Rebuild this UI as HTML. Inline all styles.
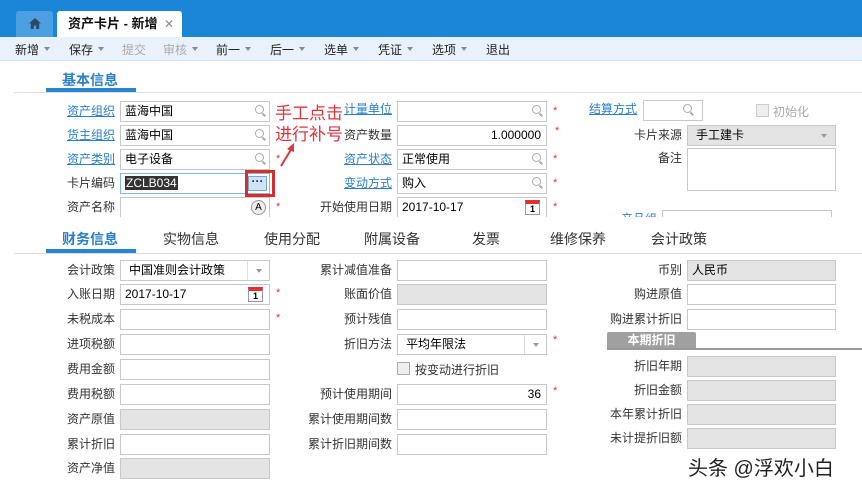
<!DOCTYPE html>
<html><head><meta charset="utf-8"><style>
*{margin:0;padding:0;box-sizing:border-box}
body{width:862px;height:491px;overflow:hidden;background:#fff;font-family:"Liberation Sans","Noto Sans CJK SC",sans-serif;font-size:12px;color:#333;position:relative}
.a{position:absolute}
.lb{position:absolute;text-align:right;font-size:12px;color:#333;line-height:20px}
.lk{color:#2a7fc9;text-decoration:underline}
.in{position:absolute;height:21px;border:1px solid #c8c8c8;background:#fff;font-size:12px;line-height:19px;padding-left:4px;color:#000}
.g{background:#e4e4e4}
.st{position:absolute;color:#d33;font-size:11px}
.mg{position:absolute;right:5px;top:3px;width:9px;height:9px;border:1.5px solid #aaa;border-radius:50%}
.mg:after{content:"";position:absolute;width:4px;height:1.5px;background:#aaa;transform:rotate(45deg);left:6px;top:8px}
.dd{position:absolute;right:0;top:0;width:22px;height:19px;border-left:1px solid #ddd}
.dd:after{content:"";position:absolute;left:8px;top:8px;border:3px solid transparent;border-top:4px solid #999}
.cal{position:absolute;right:6px;top:2px;width:15px;height:15px;border:1px solid #999;border-top:4px solid #e03030;font-size:9px;font-weight:bold;text-align:center;line-height:10px;color:#000}
.tb{position:absolute;top:41px;font-size:12px;color:#222}
.ar{display:inline-block;margin-left:5px;border:3px solid transparent;border-top:4px solid #888;vertical-align:middle}
.tab{position:absolute;top:229px;font-size:14px;color:#333}
</style></head><body>
<div class="a" style="left:0;top:0;width:862px;height:37px;background:#1b86d6"></div>
<div class="a" style="left:16px;top:11px;width:37px;height:26px;background:#4c9fe0;border-radius:3px 3px 0 0"></div>
<svg class="a" style="left:29px;top:18px" width="12" height="11" viewBox="0 0 12 11"><path d="M6 0L0 5.5h1.8V11h3V7.5h2.4V11h3V5.5H12z" fill="#2a4a6a"/></svg>
<div class="a" style="left:57px;top:11px;width:125px;height:26px;background:#fff;border-radius:3px 3px 0 0;font-weight:bold;font-size:13px;line-height:26px;padding-left:11px;color:#111">资产卡片 - 新增</div>
<div class="a" style="left:164px;top:17px;color:#888;font-size:12px">✕</div>
<div class="a" style="left:0;top:37px;width:862px;height:24px;background:#e9f2fb;border-bottom:1px solid #d5e3f0"></div>
<div class="tb" style="left:15px">新增<span class="ar"></span></div>
<div class="tb" style="left:69px">保存<span class="ar"></span></div>
<div class="tb" style="left:122px;color:#aaa">提交</div>
<div class="tb" style="left:163px;color:#aaa">审核<span class="ar"></span></div>
<div class="tb" style="left:216px">前一<span class="ar"></span></div>
<div class="tb" style="left:270px">后一<span class="ar"></span></div>
<div class="tb" style="left:324px">选单<span class="ar"></span></div>
<div class="tb" style="left:378px">凭证<span class="ar"></span></div>
<div class="tb" style="left:432px">选项<span class="ar"></span></div>
<div class="tb" style="left:486px">退出</div>

<div class="a" style="left:62px;top:70px;font-size:14px;font-weight:bold;color:#2a7fc9">基本信息</div>
<div class="a" style="left:14px;top:92px;width:848px;height:1px;background:#ddd"></div>
<div class="a" style="left:46px;top:88px;width:90px;height:4px;background:#2a85d0"></div>

<div class="lb lk" style="left:50px;top:101px;width:65px">资产组织</div>
<div class="in" style="left:120px;top:101px;width:150px">蓝海中国<span class="mg"></span></div>
<div class="lb lk" style="left:50px;top:125px;width:65px">货主组织</div>
<div class="in" style="left:120px;top:125px;width:150px">蓝海中国<span class="mg"></span></div>
<div class="lb lk" style="left:50px;top:149px;width:65px">资产类别</div>
<div class="in" style="left:120px;top:149px;width:150px">电子设备<span class="mg"></span></div>
<div class="st" style="left:276px;top:153px">*</div>
<div class="lb" style="left:50px;top:173px;width:65px">卡片编码</div>
<div class="in" style="left:120px;top:173px;width:150px;border-color:#8ab6de"><span style="background:#333;color:#fff;padding:0 1px">ZCLB034</span>
<span class="a" style="right:2px;top:2px;width:19px;height:15px;background:#cfe3f5;border:1px solid #7aa7d0;font-weight:bold;line-height:8px;text-align:center;color:#234">···</span></div>
<div class="a" style="left:245px;top:170px;width:30px;height:27px;border:3px solid #d32f2f"></div>
<div class="lb" style="left:50px;top:197px;width:65px">资产名称</div>
<div class="in" style="left:120px;top:197px;width:150px"><span class="a" style="right:3px;top:2px;width:15px;height:15px;border:1px solid #999;border-radius:50%;background:#eee;font-size:10px;line-height:13px;text-align:center">A</span></div>
<div class="st" style="left:276px;top:201px">*</div>

<div class="a" style="left:275px;top:103px;font-size:17px;line-height:21px;color:#e0343c">手工点击<br>进行补号</div>
<svg class="a" style="left:276px;top:140px" width="24" height="30"><path d="M5 26L16 8" stroke="#e0343c" stroke-width="2"/><path d="M18 3L11 9L18 12z" fill="#e0343c"/></svg>

<div class="lb lk" style="left:330px;top:99px;width:62px">计量单位</div>
<div class="in" style="left:397px;top:101px;width:150px"><span class="mg"></span></div>
<div class="st" style="left:553px;top:105px">*</div>
<div class="lb" style="left:330px;top:125px;width:62px">资产数量</div>
<div class="in" style="left:397px;top:125px;width:150px;text-align:right;padding-right:5px">1.000000</div>
<div class="st" style="left:555px;top:125px">*</div>
<div class="lb lk" style="left:330px;top:149px;width:62px">资产状态</div>
<div class="in" style="left:397px;top:149px;width:150px">正常使用<span class="mg"></span></div>
<div class="st" style="left:553px;top:153px">*</div>
<div class="lb lk" style="left:330px;top:173px;width:62px">变动方式</div>
<div class="in" style="left:397px;top:173px;width:150px">购入<span class="mg"></span></div>
<div class="st" style="left:553px;top:177px">*</div>
<div class="lb" style="left:300px;top:197px;width:92px">开始使用日期</div>
<div class="in" style="left:397px;top:197px;width:150px">2017-10-17<span class="cal">1</span></div>
<div class="st" style="left:553px;top:201px">*</div>

<div class="lb lk" style="left:580px;top:99px;width:57px">结算方式</div>
<div class="in" style="left:643px;top:100px;width:60px"><span class="mg" style="right:10px"></span></div>
<div class="a" style="left:756px;top:104px;width:13px;height:13px;border:1px solid #ccc;background:#eee"></div>
<div class="a" style="left:773px;top:103px;color:#aaa;font-size:12px">初始化</div>
<div class="lb" style="left:600px;top:125px;width:82px">卡片来源</div>
<div class="in g" style="left:687px;top:125px;width:149px;padding-left:8px">手工建卡<span class="dd" style="border:0"></span></div>
<div class="lb" style="left:600px;top:148px;width:82px">备注</div>
<div class="in" style="left:687px;top:148px;width:149px;height:43px"></div>
<div class="lb lk" style="left:600px;top:209px;width:57px;height:17px;overflow:hidden">产品组</div>
<div class="in" style="left:662px;top:210px;width:170px;height:17px;border-bottom:0"></div>

<div class="a" style="left:0;top:217px;width:862px;height:10px;background:#fff"></div>
<div class="tab" style="left:62px;font-weight:bold;color:#2a7fc9">财务信息</div>
<div class="tab" style="left:163px">实物信息</div>
<div class="tab" style="left:264px">使用分配</div>
<div class="tab" style="left:364px">附属设备</div>
<div class="tab" style="left:472px">发票</div>
<div class="tab" style="left:550px">维修保养</div>
<div class="tab" style="left:651px">会计政策</div>
<div class="a" style="left:14px;top:253px;width:848px;height:1px;background:#ddd"></div>
<div class="a" style="left:46px;top:249px;width:90px;height:4px;background:#2a85d0"></div>

<div class="lb" style="left:50px;top:260px;width:65px">会计政策</div>
<div class="in" style="left:120px;top:260px;width:150px;padding-left:8px">中国准则会计政策<span class="dd"></span></div>
<div class="lb" style="left:50px;top:284px;width:65px">入账日期</div>
<div class="in" style="left:120px;top:284px;width:150px">2017-10-17<span class="cal">1</span></div>
<div class="st" style="left:276px;top:287px">*</div>
<div class="lb" style="left:50px;top:309px;width:65px">未税成本</div>
<div class="in" style="left:120px;top:309px;width:150px"></div>
<div class="st" style="left:276px;top:312px">*</div>
<div class="lb" style="left:50px;top:334px;width:65px">进项税额</div>
<div class="in" style="left:120px;top:334px;width:150px"></div>
<div class="lb" style="left:50px;top:359px;width:65px">费用金额</div>
<div class="in" style="left:120px;top:359px;width:150px"></div>
<div class="lb" style="left:50px;top:384px;width:65px">费用税额</div>
<div class="in" style="left:120px;top:384px;width:150px"></div>
<div class="lb" style="left:50px;top:409px;width:65px">资产原值</div>
<div class="in g" style="left:120px;top:409px;width:150px"></div>
<div class="lb" style="left:50px;top:434px;width:65px">累计折旧</div>
<div class="in" style="left:120px;top:434px;width:150px"></div>
<div class="lb" style="left:50px;top:458px;width:65px">资产净值</div>
<div class="in g" style="left:120px;top:458px;width:150px"></div>

<div class="lb" style="left:290px;top:260px;width:102px">累计减值准备</div>
<div class="in" style="left:397px;top:260px;width:150px"></div>
<div class="lb" style="left:290px;top:284px;width:102px">账面价值</div>
<div class="in g" style="left:397px;top:284px;width:150px"></div>
<div class="lb" style="left:290px;top:309px;width:102px">预计残值</div>
<div class="in" style="left:397px;top:309px;width:150px"></div>
<div class="lb" style="left:290px;top:334px;width:102px">折旧方法</div>
<div class="in" style="left:397px;top:334px;width:150px;padding-left:8px">平均年限法<span class="dd"></span></div>
<div class="st" style="left:553px;top:334px">*</div>
<div class="a" style="left:397px;top:362px;width:13px;height:13px;border:1px solid #aaa;background:#eee"></div>
<div class="a" style="left:415px;top:361px;font-size:12px">按变动进行折旧</div>
<div class="lb" style="left:290px;top:384px;width:102px">预计使用期间</div>
<div class="in" style="left:397px;top:384px;width:150px;text-align:right;padding-right:5px">36</div>
<div class="st" style="left:553px;top:385px">*</div>
<div class="lb" style="left:290px;top:409px;width:102px">累计使用期间数</div>
<div class="in" style="left:397px;top:409px;width:150px"></div>
<div class="lb" style="left:290px;top:434px;width:102px">累计折旧期间数</div>
<div class="in" style="left:397px;top:434px;width:150px"></div>

<div class="lb" style="left:590px;top:260px;width:92px">币别</div>
<div class="in g" style="left:687px;top:260px;width:149px">人民币</div>
<div class="lb" style="left:590px;top:284px;width:92px">购进原值</div>
<div class="in" style="left:687px;top:284px;width:149px"></div>
<div class="lb" style="left:590px;top:309px;width:92px">购进累计折旧</div>
<div class="in" style="left:687px;top:309px;width:149px"></div>
<div class="a" style="left:607px;top:332px;width:89px;height:17px;background:#a0a0a0;border-radius:2px 2px 0 0;color:#fff;font-weight:bold;text-align:center;line-height:17px">本期折旧</div>
<div class="a" style="left:607px;top:348px;width:255px;height:2px;background:#999"></div>
<div class="lb" style="left:590px;top:356px;width:92px">折旧年期</div>
<div class="in g" style="left:687px;top:356px;width:149px"></div>
<div class="lb" style="left:590px;top:380px;width:92px">折旧金额</div>
<div class="in g" style="left:687px;top:380px;width:149px"></div>
<div class="lb" style="left:590px;top:404px;width:92px">本年累计折旧</div>
<div class="in g" style="left:687px;top:404px;width:149px"></div>
<div class="lb" style="left:590px;top:428px;width:92px">未计提折旧额</div>
<div class="in g" style="left:687px;top:428px;width:149px"></div>

<div class="a" style="left:688px;top:452px;font-size:20px;color:#222;text-shadow:0 0 2px #fff">头条 @浮欢小白</div>
</body></html>
